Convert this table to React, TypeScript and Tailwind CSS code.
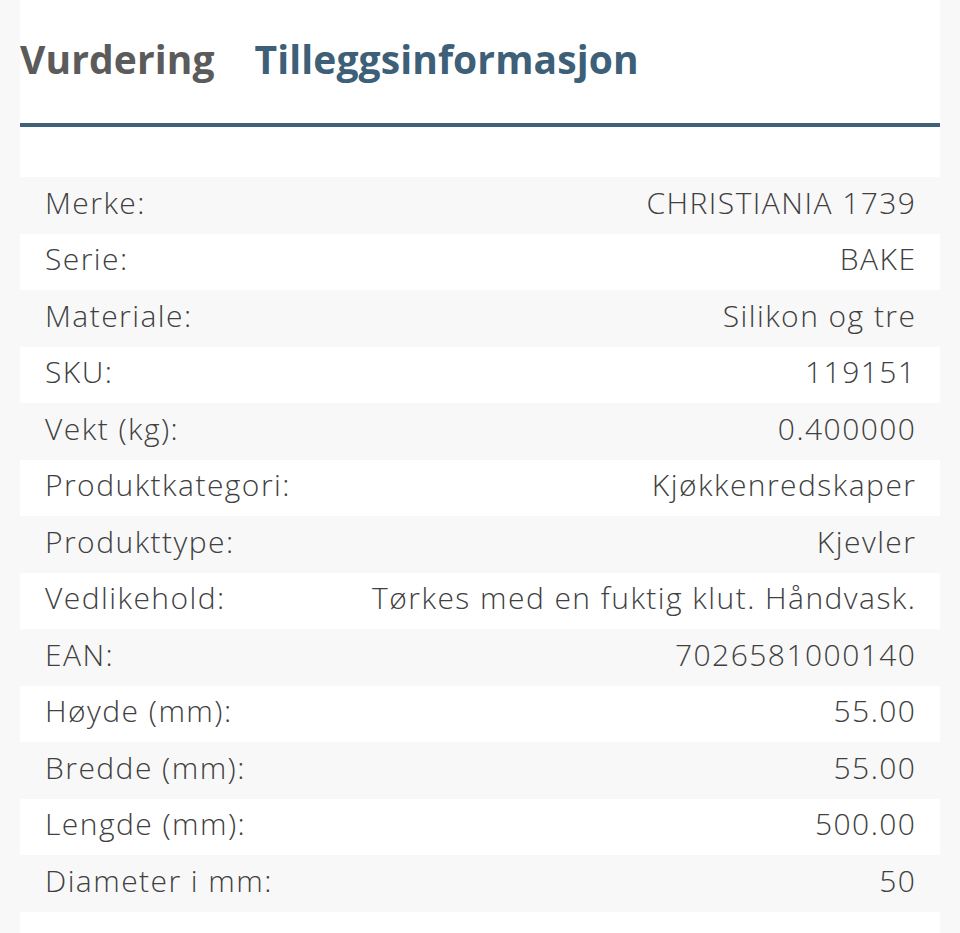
import React from "react";

const rows: [string, string][] = [
  ["Merke:", "CHRISTIANIA 1739"],
  ["Serie:", "BAKE"],
  ["Materiale:", "Silikon og tre"],
  ["SKU:", "119151"],
  ["Vekt (kg):", "0.400000"],
  ["Produktkategori:", "Kjøkkenredskaper"],
  ["Produkttype:", "Kjevler"],
  ["Vedlikehold:", "Tørkes med en fuktig klut. Håndvask."],
  ["EAN:", "7026581000140"],
  ["Høyde (mm):", "55.00"],
  ["Bredde (mm):", "55.00"],
  ["Lengde (mm):", "500.00"],
  ["Diameter i mm:", "50"],
];

export default function App() {
  return (
    <div className="min-h-[933px] w-[960px] bg-[#f8f8f8] px-[20px] font-['Open_Sans',sans-serif]">
      <div className="bg-white min-h-[933px]">
        <div className="flex items-center gap-[40px] h-[123px] pb-[4px] text-[39px] font-bold tracking-[0.1px]">
          <span className="text-[#5b5b5b]">Vurdering</span>
          <span className="text-[#3d5f78]">Tilleggsinformasjon</span>
        </div>
        <div className="h-[4px] bg-[#3f6079]" />
        <div className="h-[50px]" />
        <div className="flex flex-col">
          {rows.map(([k, v], i) => (
            <div
              key={k}
              className={`flex items-center justify-between h-[56.5px] px-[25px] pb-[6px] text-[30px] font-light tracking-[1.45px] text-[#404040] ${i % 2 === 0 ? "bg-[#f8f8f8]" : "bg-white"}`}
            >
              <span>{k}</span>
              <span className="mr-[-1.45px]">{v}</span>
            </div>
          ))}
        </div>
      </div>
    </div>
  );
}
